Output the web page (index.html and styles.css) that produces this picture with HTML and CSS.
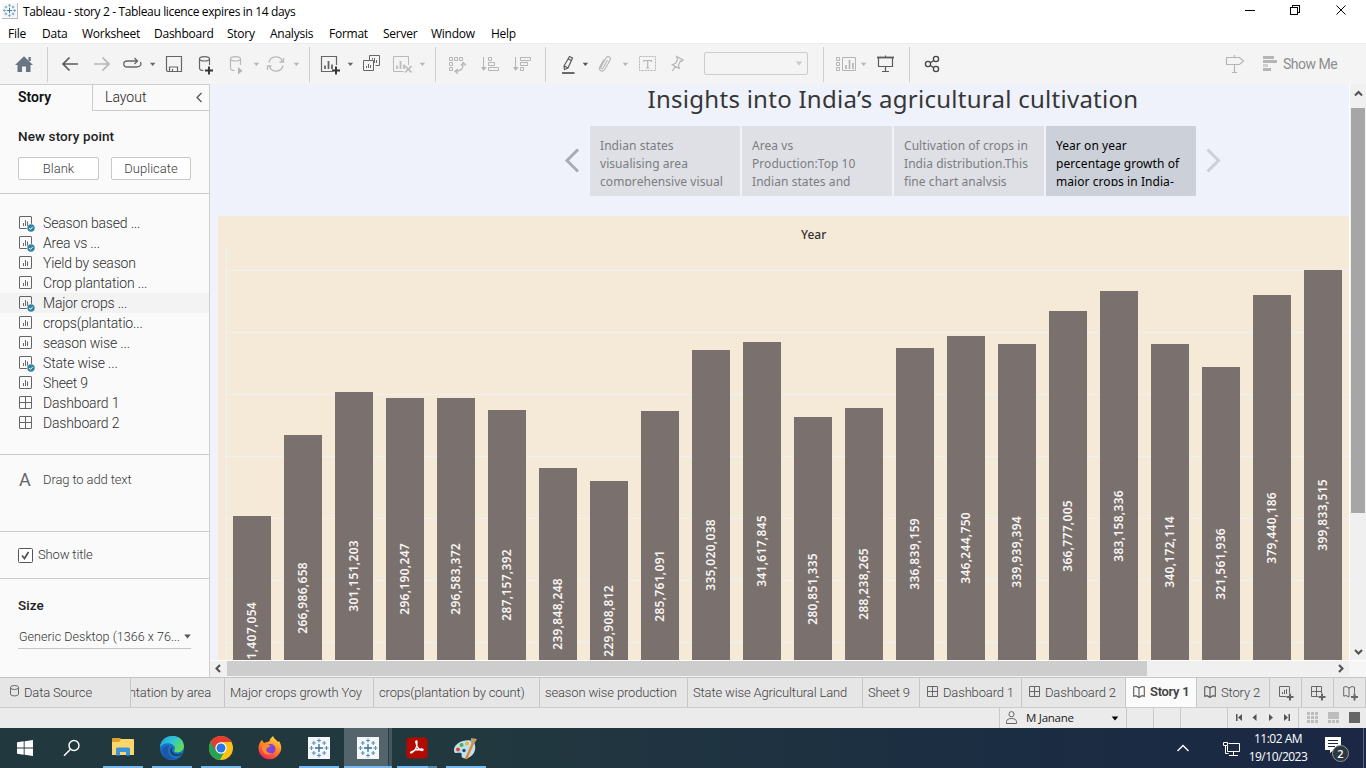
FILE: index.html
```html
<!DOCTYPE html>
<html lang="en">
<head>
<meta charset="utf-8">
<title>Tableau - story 2</title>
<link rel="stylesheet" href="styles.css">
</head>
<body>
<svg class="defs" width="0" height="0">
  <symbol id="sheet" viewBox="0 0 16 16"><rect x="1.5" y="1.5" width="12" height="12" rx=".5" fill="none" stroke="#666"/><path d="M5.500 11V8M7.500 11V5M9.500 11V6.500" stroke="#666" fill="none"/></symbol>
  <symbol id="used" viewBox="0 0 16 16"><circle cx="8" cy="8" r="4.300" fill="#fafafa"/><circle cx="8" cy="8" r="3.700" fill="#3482a0"/><path d="M6.200 8l1.300 1.400 2.300-2.600" stroke="#fff" fill="none"/></symbol>
  <symbol id="dash" viewBox="0 0 16 16"><path d="M2 1.500h11q.5 0 .5.500v11q0 .5-.5.500h-11q-.5 0-.5-.5v-11q0-.5.5-.5zM7.500 1.500v12M1.500 7.500h12" fill="none" stroke="#666"/></symbol>
  <symbol id="dash-s" viewBox="0 0 12 12"><path d="M.5 .5h10v10h-10zM5.500 .5v10M.5 5.500h10" fill="none" stroke="#666"/></symbol>
  <symbol id="book" viewBox="0 0 13 12"><path d="M.7 1l2.300-.5 3 1.600 3-1.600 2.300.5v9.200l-2.300-.5-3 1.800-3-1.800-2.300.5zM6 2.200v9" fill="none" stroke="#5a5a5a" stroke-width="1.100"/></symbol>
  <symbol id="caret" viewBox="0 0 7 5"><path d="M.2 .6h6.600L3.500 4.400z"/></symbol>
  <symbol id="tab" viewBox="0 0 22 22"><rect width="22" height="22" fill="#f5f8fb"/><path d="M11 7v8M7 11h8" stroke="#356d93" stroke-width="1.300"/><path d="M11 1.500v4M9 3.500h4M11 16.500v4M9 18.500h4M3.500 9v4M1.500 11h4M18.500 9v4M16.500 11h4M5.800 4v4M3.800 6h4M16.200 4v4M14.200 6h4M5.800 14v4M3.800 16h4M16.200 14v4M14.200 16h4" stroke="#5c91b5" stroke-width="1.100"/></symbol>
</svg>

<header class="titlebar">
  <svg class="app-icon" width="16" height="16"><use href="#tab"/></svg>
  <span class="app-title">Tableau - story 2 - Tableau licence expires in 14 days</span>
  <svg class="win-buttons" width="120" height="22" viewBox="1240 0 120 22" fill="none" stroke="#000" shape-rendering="crispEdges"><path d="M1245 10.500h10M1290.500 7.500h7v7h-7zM1292.500 7.500v-2h7v7h-2"/><path d="M1336.500 5.500l9 9M1345.500 5.500l-9 9" shape-rendering="auto"/></svg>
</header>
<nav class="menu">
  <span style="width:34px">File</span><span style="width:40px">Data</span><span style="width:72px">Worksheet</span><span style="width:73px">Dashboard</span><span style="width:43px">Story</span><span style="width:59px">Analysis</span><span style="width:54px">Format</span><span style="width:48px">Server</span><span style="width:60px">Window</span><span>Help</span>
</nav>

<div class="toolbar">
  <svg width="47" height="41" viewBox="0 43 47 41"><path d="M24 56.300l9 8.700h-2.500v7H26v-5.500h-4V72h-4.500v-7H15z" fill="#687582"/><path d="M28.500 57h2.300v4h-2.300z" fill="#687582"/></svg>
  <i class="sep"></i>
  <svg width="38" height="41" viewBox="48 43 38 41" fill="none" stroke="#5b5b5b" stroke-width="1.700"><path d="M69.500 57.500L63 64l6.500 6.500M63 64h15"/></svg>
  <svg width="30" height="41" viewBox="86 43 30 41" fill="none" stroke="#b5b5b5" stroke-width="1.700"><path d="M102.500 57.500L109 64l-6.500 6.500M109 64H94"/></svg>
  <svg width="44" height="41" viewBox="116 43 44 41" fill="none" stroke="#666" stroke-width="1.300"><path d="M137 61h-9.500c-5 0-5 6 0 6h9c4.500 0 5-3 4-5M134.500 58l3 3-3 3"/><path d="M150 62.700h5.400l-2.700 3.300z" fill="#666" stroke="none"/></svg>
  <svg width="32" height="41" viewBox="160 43 32 41" fill="none" stroke="#666" stroke-width="1.200"><path d="M166.500 56.500h15v15h-14l-1-1zM169.500 71v-4h8v4M172.500 71v-2"/></svg>
  <svg width="30" height="41" viewBox="192 43 30 41" fill="none" stroke="#666" stroke-width="1.200"><ellipse cx="204.500" cy="58.800" rx="5" ry="2.200"/><path d="M199.500 59v9c0 1.700 2 2.500 4 2.500M209.500 59v6"/><path d="M209 66.500v8M205 70.500h8" stroke="#333" stroke-width="1.900"/></svg>
  <svg width="43" height="41" viewBox="222 43 43 41" fill="none" stroke="#b9b9b9" stroke-width="1.200"><ellipse cx="235.500" cy="58.800" rx="5" ry="2.200"/><path d="M230.500 59v9c0 1.700 2 2.500 4 2.500M240.500 59v6"/><path d="M238 67v7.500l4.500-3.700zM253.700 62.700h5.400l-2.700 3.300z" fill="#b5b5b5" stroke="none"/></svg>
  <svg width="44" height="41" viewBox="265 43 44 41" fill="none" stroke="#b9b9b9" stroke-width="1.300"><path d="M269 62.500c1.500-7 11-7.500 13.500-1M283 65.500c-1.500 7-11 7.500-13.500 1M283.500 58v4h-4M267.500 70v-4h4"/><path d="M293.700 62.700h5.400l-2.700 3.300z" fill="#b5b5b5" stroke="none"/></svg>
  <i class="sep"></i>
  <svg width="50" height="41" viewBox="310 43 50 41" fill="none" stroke="#666" stroke-width="1.200"><path d="M336.500 65v-8.500h-15v15h11"/><path d="M325 69v-3.500M328.500 69v-8M332 69v-4.500" stroke-width="1.800"/><path d="M336 66.500v8M332 70.500h8" stroke="#333" stroke-width="1.900"/><path d="M347.700 62.700h5.400l-2.700 3.300z" fill="#666" stroke="none"/></svg>
  <svg width="28" height="41" viewBox="360 43 28 41" fill="none" stroke="#666"><path d="M369.500 60v-4.500h10v10h-4M363.500 60.500h10v10h-10zM366.500 68v-2M368.500 68v-4M370.500 68v-3M372.500 59.500V58M374.500 63v-5M376.500 63v-3"/></svg>
  <svg width="47" height="41" viewBox="388 43 47 41" fill="none" stroke="#b9b9b9"><path d="M408.500 65v-8.500h-15v15h10"/><path d="M397 69v-3.500M400.500 69v-8M404 69v-4.500" stroke-width="1.700"/><path d="M405 66l6.500 6.500M411.500 66L405 72.500" stroke-width="1.700"/><path d="M419.700 62.700h5.400l-2.700 3.300z" fill="#b5b5b5" stroke="none"/></svg>
  <i class="sep"></i>
  <svg width="39" height="41" viewBox="436 43 39 41" fill="none" stroke="#b5b5b5"><path d="M449.500 57.500h3v3h-3zM454.500 57.500h3v3h-3zM459.500 57.500h3v3h-3zM449.500 62.500h3v3h-3zM449.500 67.500h3v3h-3z"/><path d="M463 64c.2 4-2 7-7 7.300M461 65.500l2.300-3 2.500 3M458 69l-3 2.300 3 2.500" stroke-width="1.300"/></svg>
  <svg width="30" height="41" viewBox="475 43 30 41" fill="none" stroke="#b5b5b5"><path d="M483.500 57v12M488.500 57.500h3v3h-3zM488.500 62.500h6v3h-6zM488.500 67.500h10v3h-10z"/><path d="M481 67h5.500l-2.800 4z" fill="#b5b5b5" stroke="none"/></svg>
  <svg width="40" height="41" viewBox="505 43 40 41" fill="none" stroke="#b5b5b5"><path d="M515.500 57v12M520.500 57.500h10v3h-10zM520.500 62.500h7v3h-7zM520.500 67.500h3v3h-3z"/><path d="M513 67h5.500l-2.800 4z" fill="#b5b5b5" stroke="none"/></svg>
  <i class="sep"></i>
  <svg width="46" height="41" viewBox="546 43 46 41" fill="none" stroke="#5b5b5b" stroke-width="1.200"><path d="M569.500 56.500l3 1.500-4.500 10-3.500 1.500-.5-3.500zM564.500 66l3.500 2M568.500 59l2.800 1.500"/><path d="M562 73h12.500" stroke-width="1.800"/><path d="M582.700 62.700h5.400l-2.700 3.300z" fill="#555" stroke="none"/></svg>
  <svg width="40" height="41" viewBox="592 43 40 41" fill="none" stroke="#b5b5b5" stroke-width="1.100"><path d="M607.500 60l-4.500 8c-1 1.500-3 .5-2-1.200l4.800-8.500c2-3.300 6-1 4.200 2l-5 8.700c-2.500 4-7 1.500-5-2.500l4-7"/><path d="M622.700 62.700h5.400l-2.700 3.300z" fill="#b5b5b5" stroke="none"/></svg>
  <svg width="32" height="41" viewBox="632 43 32 41" fill="none" stroke="#b5b5b5"><path d="M639.500 56.500h16v14h-16z" stroke-dasharray="2 1"/><path d="M644 62v-1.500h7.500V62M647.700 60.500v7.500M646 68h3.500" stroke-width="1.200"/></svg>
  <svg width="40" height="41" viewBox="664 43 40 41" fill="none" stroke="#b5b5b5" stroke-width="1.200"><path d="M676.500 56.500l6.500 3.300-1 1.300-1.500-.3-2 4.200.7 3.500-7-3.700 3.500-1.500 2-4.200zM675 66.500l-2.500 4.500"/></svg>
  <div class="combo"><svg width="8" height="5" fill="#c9c9c9"><use href="#caret"/></svg></div>
  <i class="sep combo-sep"></i>
  <svg width="48" height="41" viewBox="824 43 48 41" fill="none" stroke="#b5b5b5"><path d="M836.500 57.500h3v3h-3zM836.500 62.500h3v3h-3zM836.500 67.500h3v3h-3zM842.500 57.500h13v13h-13z"/><path d="M846 69v-4M849.500 69v-9M853 69v-6" stroke-width="1.700"/><path d="M861 62.700h5.400l-2.700 3.300z" fill="#b5b5b5" stroke="none"/></svg>
  <svg width="37" height="41" viewBox="872 43 37 41" fill="none" stroke="#5b5b5b" stroke-width="1.200"><path d="M877 57.500h17" stroke-width="1.800"/><path d="M878.500 58v8.500h14V58M885.500 55.500v1.500M885.500 66.500v5M882 71.500h7"/></svg>
  <i class="sep"></i>
  <svg width="40" height="41" viewBox="910 43 40 41" fill="none" stroke="#444" stroke-width="1.300"><circle cx="928" cy="64" r="2.600"/><circle cx="936" cy="59" r="2.600"/><circle cx="936" cy="69" r="2.600"/><path d="M930.300 62.700l3.500-2.200M930.300 65.500l3.500 2.200"/></svg>
  <svg class="push" width="38" height="41" viewBox="1218 43 38 41" fill="none" stroke="#b5b5b5" stroke-width="1.200"><path d="M1226.500 57.500h13l4 3.500-4 3.500h-13zM1234.500 55v2M1234.500 65v7.500M1232 72.500h5"/></svg>
  <svg width="27" height="41" viewBox="1256 43 27 41" fill="#b5b5b5"><path d="M1263 56h11v3h-11zM1263 60h14v3h-14zM1263 68h8v3h-8z"/><path d="M1263 64h5v3h-5z" fill="#d2d2d2"/></svg>
  <span class="show-me">Show Me</span>
</div>

<div class="work">
  <aside class="side">
    <div class="side-tabs"><b>Story</b><div class="layout-tab"><span>Layout</span><svg width="8" height="12" fill="none" stroke="#555" stroke-width="1.300"><path d="M6.500 1L2 5.500 6.500 10"/></svg></div></div>
    <section class="new-point">
      <h3>New story point</h3>
      <div class="buttons"><button style="width:81px">Blank</button><button style="width:80px">Duplicate</button></div>
    </section>
    <ul class="sheets">
      <li><span class="ic"><svg width="16" height="16"><use href="#sheet"/></svg><svg class="badge" width="16" height="16"><use href="#used"/></svg></span>Season based ...</li>
      <li><span class="ic"><svg width="16" height="16"><use href="#sheet"/></svg><svg class="badge" width="16" height="16"><use href="#used"/></svg></span>Area vs ...</li>
      <li><span class="ic"><svg width="16" height="16"><use href="#sheet"/></svg></span>Yield by season</li>
      <li><span class="ic"><svg width="16" height="16"><use href="#sheet"/></svg></span>Crop plantation ...</li>
      <li class="hover"><span class="ic"><svg width="16" height="16"><use href="#sheet"/></svg><svg class="badge" width="16" height="16"><use href="#used"/></svg></span>Major crops ...</li>
      <li><span class="ic"><svg width="16" height="16"><use href="#sheet"/></svg></span>crops(plantatio...</li>
      <li><span class="ic"><svg width="16" height="16"><use href="#sheet"/></svg></span>season wise ...</li>
      <li><span class="ic"><svg width="16" height="16"><use href="#sheet"/></svg><svg class="badge" width="16" height="16"><use href="#used"/></svg></span>State wise ...</li>
      <li><span class="ic"><svg width="16" height="16"><use href="#sheet"/></svg></span>Sheet 9</li>
      <li><span class="ic"><svg width="16" height="16"><use href="#dash"/></svg></span>Dashboard 1</li>
      <li><span class="ic"><svg width="16" height="16"><use href="#dash"/></svg></span>Dashboard 2</li>
    </ul>
    <section class="drag"><span class="letter">A</span><span>Drag to add text</span></section>
    <section class="show-title"><svg width="15" height="15" fill="none"><rect x=".5" y=".5" width="14" height="14" rx="1" stroke="#555" fill="#fff"/><path d="M4 7.500l2.500 3L10.500 4" stroke="#555" stroke-width="1.800"/></svg><span>Show title</span></section>
    <section class="size"><h3>Size</h3><div class="select"><span>Generic Desktop (1366 x 76...</span><svg width="7" height="5" fill="#555"><use href="#caret"/></svg></div></section>
  </aside>

  <main class="view">
    <div class="canvas">
      <div class="story">
        <h1>Insights into India’s agricultural cultivation</h1>
        <div class="nav">
          <svg width="16" height="26" fill="none" stroke="#a9acb1" stroke-width="3"><path d="M14 1.500L3 12.500 14 23.500"/></svg>
          <div class="points">
            <div class="point"><p>Indian states<br>visualising area<br>comprehensive visual</p></div>
            <div class="point"><p>Area vs<br>Production:Top 10<br>Indian states and</p></div>
            <div class="point"><p>Cultivation of crops in<br>India distribution.This<br>fine chart analysis</p></div>
            <div class="point current"><p>Year on year<br>percentage growth of<br>major crops in India-</p></div>
          </div>
          <svg width="16" height="26" fill="none" stroke="#ccd0d8" stroke-width="3"><path d="M1.500 1.500l11 11-11 11"/></svg>
        </div>
        <div class="chart">
          <div class="year">Year</div>
          <div class="plot">
            <div class="bar" style="height:244px"><span>201,407,054</span></div>
            <div class="bar" style="height:325px"><span>266,986,658</span></div>
            <div class="bar" style="height:368px"><span>301,151,203</span></div>
            <div class="bar" style="height:362px"><span>296,190,247</span></div>
            <div class="bar" style="height:362px"><span>296,583,372</span></div>
            <div class="bar" style="height:350px"><span>287,157,392</span></div>
            <div class="bar" style="height:292px"><span>239,848,248</span></div>
            <div class="bar" style="height:279px"><span>229,908,812</span></div>
            <div class="bar" style="height:349px"><span>285,761,091</span></div>
            <div class="bar" style="height:410px"><span>335,020,038</span></div>
            <div class="bar" style="height:418px"><span>341,617,845</span></div>
            <div class="bar" style="height:343px"><span>280,851,335</span></div>
            <div class="bar" style="height:352px"><span>288,238,265</span></div>
            <div class="bar" style="height:412px"><span>336,839,159</span></div>
            <div class="bar" style="height:424px"><span>346,244,750</span></div>
            <div class="bar" style="height:416px"><span>339,939,394</span></div>
            <div class="bar" style="height:449px"><span>366,777,005</span></div>
            <div class="bar" style="height:469px"><span>383,158,336</span></div>
            <div class="bar" style="height:416px"><span>340,172,114</span></div>
            <div class="bar" style="height:393px"><span>321,561,936</span></div>
            <div class="bar" style="height:465px"><span>379,440,186</span></div>
            <div class="bar" style="height:490px"><span>399,833,515</span></div>
          </div>
        </div>
      </div>
      <div class="vscroll"><svg width="15" height="24" fill="none" stroke="#505050" stroke-width="2"><path d="M4 11.500L7.500 8l3.500 3.500"/></svg><div class="vthumb"></div><svg class="end" width="15" height="18" fill="none" stroke="#505050" stroke-width="2"><path d="M4 8l3.500 3.500L11 8"/></svg></div>
    </div>
    <div class="hscroll"><svg width="17" height="15" fill="none" stroke="#505050" stroke-width="2"><path d="M10 4L6.500 7.500 10 11"/></svg><div class="hthumb"></div><svg class="hend" width="17" height="15" fill="none" stroke="#505050" stroke-width="2"><path d="M7 4l3.500 3.500L7 11"/></svg><div class="corner"></div></div>
  </main>
</div>

<div class="tabs">
  <div class="tab source" style="width:131px"><svg width="9" height="12" fill="none" stroke="#666"><ellipse cx="4.500" cy="2.500" rx="4" ry="2"/><path d="M.5 2.500v6.500c0 2.500 8 2.500 8 0V2.500"/></svg><span>Data Source</span></div>
  <div class="tab cut" style="width:94px"><span>ntation by area</span></div>
  <div class="tab" style="width:149px"><span>Major crops growth Yoy</span></div>
  <div class="tab" style="width:166px"><span>crops(plantation by count)</span></div>
  <div class="tab" style="width:148px"><span>season wise production</span></div>
  <div class="tab" style="width:175px"><span>State wise Agricultural Land</span></div>
  <div class="tab" style="width:57px"><span>Sheet 9</span></div>
  <div class="tab icon" style="width:102px"><svg width="12" height="12"><use href="#dash-s"/></svg><span>Dashboard 1</span></div>
  <div class="tab icon" style="width:104px"><svg width="12" height="12"><use href="#dash-s"/></svg><span>Dashboard 2</span></div>
  <div class="tab icon active" style="width:71px"><svg width="13" height="12"><use href="#book"/></svg><span>Story 1</span></div>
  <div class="tab icon" style="width:73px"><svg width="13" height="12"><use href="#book"/></svg><span>Story 2</span></div>
  <div class="tab add"><svg width="17" height="16" fill="none" stroke="#666"><path d="M10.500 7V.5H.5v10H7M3.500 8V6M5.500 8V4M7.500 8V3"/><path d="M11 7.500v7M7.500 11h7" stroke-width="2"/></svg></div>
  <div class="tab add"><svg width="17" height="16" fill="none" stroke="#666"><path d="M10.500 7V.5H.5v10H7M5.500 .5v10M.5 5.500h10"/><path d="M11 7.500v7M7.500 11h7" stroke-width="2"/></svg></div>
  <div class="tab add"><svg width="17" height="16" fill="none" stroke="#666"><path d="M11.500 7V1.200L9 .5 6 2 3 .5.700 1.200v9L3 9.500l3 1.500M6 2v9"/><path d="M11.500 7.500v7M8 11h7" stroke-width="2"/></svg></div>
</div>

<div class="status">
  <div class="user"><svg width="11" height="14" fill="none" stroke="#666"><circle cx="5.500" cy="3.200" r="2.600"/><path d="M.5 12.500v-2c0-4 10-4 10 0v2z"/></svg><span>M Janane</span><svg class="drop" width="8" height="5"><use href="#caret"/></svg></div>
  <div style="width:27px"></div><div style="width:27px"></div><div style="width:47px"></div>
  <div style="width:71px"><svg width="70" height="20" viewBox="1228 708 70 20" fill="#555"><path d="M1236 714h1.500v7h-1.500zM1242 714v7l-4-3.500zM1256.500 714v7l-4-3.500zM1269 714v7l4-3.500zM1284 714v7l4-3.500zM1288.500 714h1.500v7h-1.500z"/></svg></div>
  <div style="width:68px"><svg width="66" height="20" viewBox="1299 708 66 20" fill="#bdbdbd"><path d="M1307 712h3v3h-3zM1311 712h3v3h-3zM1315 712h3v3h-3zM1307 716h3v3h-3zM1311 716h3v3h-3zM1315 716h3v3h-3zM1307 720h3v3h-3zM1311 720h3v3h-3zM1315 720h3v3h-3zM1328 712h11v7h-11zM1328 720h3v3h-3zM1332 720h3v3h-3zM1336 720h3v3h-3z"/><path d="M1349 712h11v11h-11z" fill="#666"/></svg></div>
</div>

<footer class="taskbar">
  <div class="app"><svg width="16" height="16" fill="#fff"><path d="M0 2.200L6.700 1.300v6.200H0zM7.600 1.200L16 0v7.500H7.600zM0 8.400h6.700v6.300L0 13.800zM7.600 8.400H16V16l-8.400-1.200z"/></svg></div>
  <div class="app find"><svg width="18" height="18" fill="none" stroke="#fff" stroke-width="1.400"><circle cx="11" cy="6.500" r="5"/><path d="M7.500 10.300L1 16.800"/></svg></div>
  <div class="app run"><svg width="24" height="22"><path d="M1 2q0-1 1-1h7l2 2h11v5H1z" fill="#dda126"/><path d="M10 2h12q1 0 1 1v15H1V5h7z" fill="#fed66b"/><path d="M5 18.500V12q0-1.500 1.500-1.500h11Q19 10.500 19 12v6.500h-4V15H9v3.500z" fill="#3d94dc"/></svg></div>
  <div class="app run"><svg width="24" height="24"><defs><linearGradient id="e1" x2="1" y2=".6"><stop stop-color="#2499dd"/><stop offset=".5" stop-color="#2fc4d4"/><stop offset="1" stop-color="#64dc55"/></linearGradient></defs><circle cx="12" cy="12" r="12" fill="#1672c9"/><path d="M0 11C1-3.500 23-4 24 10c0 5-5 7.500-9 6-2-.8 0-2 0-4C14 6.500 4 5 0 11z" fill="url(#e1)"/><path d="M9 10c-3 5 0 12 7 12-7 4-14 0-14-7 0-3 3-5 7-5z" fill="#1b58a7"/><path d="M13 11c-2.500 3-.5 7 3.500 7.300 2.500.2 4.500-.8 6-1.300-2 3.500-8 4-11 1-2-2.200-1.500-6 1.500-7z" fill="#203b49"/></svg></div>
  <div class="app run"><svg width="24" height="24"><circle cx="12" cy="12" r="12" fill="#fbc116"/><path d="M12 12L1.600 6A12 12 0 0 0 11 24l5-9.500z" fill="#23a455"/><path d="M12 6h10.400A12 12 0 0 0 1.600 6L7 15z" fill="#e63b2f"/><circle cx="12" cy="12" r="5.700" fill="#fff"/><circle cx="12" cy="12" r="4.500" fill="#2b77e8"/></svg></div>
  <div class="app"><svg width="24" height="24"><defs><linearGradient id="f1" x1=".8" x2=".3" y2="1"><stop stop-color="#ffe043"/><stop offset=".5" stop-color="#ff8627"/><stop offset="1" stop-color="#f32359"/></linearGradient></defs><path d="M4 4l2 3 3-1c2 0 3-1 3-3l3-3c1 3 4 4 5 6l1-1c3 5 3 9 0 13-4 7-15 7-19 0C-.5 13 0 8 4 4z" fill="url(#f1)"/><circle cx="12.500" cy="13" r="5" fill="#8044d8"/><path d="M4 9c4-2 7 0 9 1l-4 2c-2 2 0 6 5 5-5 4-11 0-10-8z" fill="#ff8d23"/></svg></div>
  <div class="app run"><svg width="22" height="22"><use href="#tab"/></svg></div>
  <div class="app run active"><svg width="22" height="22"><use href="#tab"/></svg></div>
  <div class="app run multi"><svg width="22" height="22"><rect x=".5" y=".5" width="21" height="21" rx="3.500" fill="#b30b00"/><path d="M5 16c4-2 6.500-6 6-11 0-2-2-1-1 1 1 4 3 7 6 7.500 2 0 1-2-1-1.500-4 0-7 1-10 3-1 1 0 1 0 1z" fill="none" stroke="#fff" stroke-width="1.300"/></svg></div>
  <div class="app run"><svg width="25" height="24"><path d="M1 14C1 5 20 0 22 9c2 9-7 15-12 13-3-2 0-4-2-5-3-1-7 2-7-3z" fill="#bfe0f0"/><circle cx="5" cy="13.500" r="2" fill="#de4434"/><circle cx="8.500" cy="9" r="2" fill="#55ad43"/><circle cx="14" cy="7.500" r="2" fill="#e7b92f"/><circle cx="11" cy="14.500" r="1.700" fill="#234c63"/><path d="M13 23l7-16" stroke="#e48733" stroke-width="2.400"/><path d="M18 2l6 1-3 5-3-1z" fill="#c39a6b"/></svg></div>
  <div class="tray">
    <svg width="14" height="8" fill="none" stroke="#fff" stroke-width="1.400"><path d="M1.500 7L7 1.500 12.500 7"/></svg>
    <svg class="net" width="18" height="16" fill="none" stroke="#fff"><path d="M5.500 2.500h11v8H4.500V5M.5 1.500h4v3h-4zM2.500 4.500v8h3M10.500 11v3M6 14.500h9"/></svg>
    <div class="clock">11:02 AM<br>19/10/2023</div>
    <div class="notice"><svg width="17" height="16"><path d="M0 0h16v13H9l-4 3v-3H0z" fill="#fff"/><path d="M3 3.500h10M3 6.500h10M3 9.500h7" stroke="#1b2a44"/></svg><span>2</span></div>
  </div>
</footer>
</body>
</html>
```
FILE: styles.css
```css
* { box-sizing: border-box; }
body { margin: 0; width: 1366px; height: 768px; overflow: hidden; display: flex; flex-direction: column; background: #fff; color: #484848; font: 300 13px/16px Roboto, sans-serif; }
svg { display: block; flex: none; }
.defs { position: absolute; }
h1, h3, p, ul { margin: 0; padding: 0; }
ul { list-style: none; }

.titlebar { height: 24px; display: flex; padding: 3px 6px 0 2px; color: #000; font: 12px/18px "Open Sans", sans-serif; }
.app-title { margin-left: 5px; letter-spacing: -.36px; white-space: nowrap; }
.app-icon { border-right: 1px solid #bbb; border-bottom: 1px solid #bbb; }
.win-buttons { margin: -3px 0 0 auto; }
.menu { height: 19px; display: flex; padding-left: 8px; color: #000; font: 12px/19px "Open Sans", sans-serif; letter-spacing: -.25px; }

.toolbar { height: 41px; display: flex; background: #f4f4f4; border-top: 1px solid #ececec; }
.toolbar > svg { margin-top: -1px; }
.sep { width: 1px; height: 35px; margin-top: 3px; background: #cfcfcf; flex: none; }
.combo { width: 104px; height: 23px; margin-top: 8px; border: 1px solid #ccc; border-radius: 2px; display: flex; align-items: center; justify-content: flex-end; padding-right: 4px; }
.combo-sep { margin-left: 15px; }
.push { margin-left: auto; }
.show-me { width: 83px; padding-top: 11px; font-size: 14px; font-weight: 400; letter-spacing: -.5px; line-height: 18px; color: #8c8c8c; }

.work { height: 593px; display: flex; }
.side { width: 210px; background: #fafafa; border-top: 1px solid #cfcfcf; border-right: 1px solid #cfcfcf; }
.side-tabs { height: 26px; display: flex; font-size: 14px; line-height: 25px; color: #222; }
.side-tabs b { width: 92px; padding-left: 18px; color: #111; font-weight: 600; }
.layout-tab { flex: 1; display: flex; align-items: center; justify-content: space-between; border-left: 1px solid #ccc; border-bottom: 1px solid #ccc; padding: 0 6px 0 12px; }
.side h3 { font-size: 13.500px; line-height: 18px; font-weight: 500; letter-spacing: .1px; color: #222; }
.new-point { height: 83px; padding: 16px 18px 0; border-bottom: 1px solid #ccc; }
.buttons { width: 173px; display: flex; justify-content: space-between; margin-top: 12px; }
.buttons button { height: 23px; padding: 0; border: 1px solid #c8c8c8; border-radius: 2px; background: #fff; font: 300 13px/20px Roboto, sans-serif; color: #3c3c3c; }
.sheets { height: 261px; padding-top: 19px; border-bottom: 1px solid #ccc; }
.sheets li { height: 20px; display: flex; align-items: center; padding-left: 18px; font-size: 14px; letter-spacing: -.17px; color: #2e2e2e; }
.ic { width: 25px; height: 16px; position: relative; }
.badge { position: absolute; left: 5px; top: 5px; }
.hover { background: #f3f3f3; }
.drag { height: 77px; display: flex; padding: 17px 0 0 19px; line-height: 16px; letter-spacing: -.12px; color: #3c3c3c; border-bottom: 1px solid #ccc; }
.letter { width: 24px; font-size: 18px; font-weight: 400; color: #666; }
.show-title { height: 47px; display: flex; align-items: center; gap: 5px; padding-left: 18px; letter-spacing: -.15px; color: #333; border-bottom: 1px solid #ccc; }
.size { padding: 17px 18px 0; }
.select { height: 26px; margin-top: 9px; display: flex; align-items: center; justify-content: space-between; padding: 2px 0 0 1px; border-bottom: 1px solid #c5c5c5; font-size: 12.500px; letter-spacing: .05px; color: #333; white-space: nowrap; }

.view { flex: 1; min-width: 0; }
.canvas { height: 576px; display: flex; overflow: hidden; }
.story { width: 1139px; height: 576px; background: #eff2fb; overflow: hidden; }
h1 { height: 42px; margin-left: 227px; width: 912px; text-align: center; font: 400 24px/30px "Noto Sans", sans-serif; letter-spacing: .27px; color: #363636; }
.nav { display: flex; align-items: center; padding-left: 354px; gap: 10px; }
.points { display: flex; gap: 2px; }
.point { width: 150px; height: 70px; padding: 11px 0 0 10px; background: #dee0e6; color: #7c7d80; font: 12px/18px "Noto Sans", sans-serif; letter-spacing: .06px; white-space: nowrap; }
.point p { height: 49px; overflow: hidden; }
.point.current { background: #ccd0d8; color: #000; }
.chart { margin: 20px 0 0 8px; height: 544px; background: #f5e9d7; }
.year { height: 30px; padding: 10px 0 0 583px; font: 500 12px/18px "Noto Sans", sans-serif; color: #333; }
.plot { margin-left: 8px; height: 514px; display: flex; align-items: flex-end; gap: 13px; padding-left: 6px; border-left: 1px solid #eef2f9; background: linear-gradient(#eef0f4 1px, transparent 1px) 0 24px / 100% 62px; }
.bar { width: 38px; flex: none; display: flex; align-items: center; justify-content: center; background: #7a706d; color: #f7f5f3; font: 600 12px/16px "Noto Sans", sans-serif; letter-spacing: .3px; }
.bar span { writing-mode: vertical-rl; transform: rotate(180deg); }
.vscroll { width: 17px; display: flex; flex-direction: column; padding: 0 1px; background: #f0f0f0; border-left: 1px solid #fff; }
.vthumb { height: 405px; background: #a6a6a6; }
.vscroll .end { margin-top: auto; }
.hscroll { height: 17px; display: flex; border-top: 1px solid #fff; border-bottom: 1px solid #f5f5f5; background: #f0f0f0; }
.hthumb { width: 920px; background: #cdcdcd; }
.hend { margin-left: auto; }
.corner { width: 17px; background: #f6f6f6; }

.tabs { height: 31px; display: flex; border-top: 1px solid #c4c4c4; border-bottom: 1px solid #ccc; background: #e6e6e6; }
.tab { display: flex; align-items: center; padding-left: 5px; border-right: 1px solid #c6c6c6; font-size: 13px; letter-spacing: -.15px; color: #424242; white-space: nowrap; flex: none; overflow: hidden; }
.source { padding-left: 10px; }
.source svg { margin: -3px 5px 0 0; }
.cut { justify-content: flex-end; padding: 0 13px 0 0; }
.icon { padding-left: 7px; gap: 4px; }
.icon svg { margin-top: -2px; }
.active.tab { background: #fbfbfb; color: #444; font-weight: 600; letter-spacing: -.3px; }
.active.tab span { margin-top: -2px; }
.add { width: 32px; padding: 2px 0 0 9px; }
.status { height: 20px; display: flex; justify-content: flex-end; background: #ebebeb; }
.status > div { border-left: 1px solid #c8c8c8; }
.status .user { width: 127px; display: flex; align-items: center; padding: 0 7px 0 6px; color: #222; font: 11.500px/18px "Open Sans", sans-serif; letter-spacing: -.25px; }
.user span { margin-left: 9px; }
.drop { margin-left: auto; }

.taskbar { height: 40px; display: flex; background: linear-gradient(90deg, #22383f 0, #22383f 35%, #1b2e42 70%, #1b2744 100%); }
.app { width: 49px; display: flex; align-items: center; justify-content: center; }
.find { padding-right: 3px; }
.run { background: linear-gradient(#76b9ed, #76b9ed) 5px 38px / 40px 2px no-repeat; }
.run.active { background: linear-gradient(#76b9ed, #76b9ed) 1px 38px / 48px 2px no-repeat, linear-gradient(90deg, transparent 1px, #53646a 1px 45px, #2b3e45 45px 46px, #46585f 46px); }
.run.multi { background: linear-gradient(90deg, #76b9ed 31px, #5789ad 31px) 5px 38px / 40px 2px no-repeat; }
.tray { margin-left: auto; width: 190px; display: flex; align-items: center; color: #fff; }
.net { margin-left: 33px; margin-top: 2px; }
.clock { width: 74px; text-align: center; font: 12px/18px "Open Sans", sans-serif; letter-spacing: -.5px; }
.notice { height: 20px; width: 38px; margin-top: -4px; padding: 1px 0 0 10px; position: relative; }
.notice span { position: absolute; left: 17px; top: 9px; width: 17px; height: 17px; border-radius: 50%; border: 1px solid #8d949c; background: #2e3740; text-align: center; font: 600 11px/15px "Open Sans", sans-serif; }
.tray::after { content: ""; margin-left: 10px; width: 1px; height: 40px; background: #5d677a; }
```
